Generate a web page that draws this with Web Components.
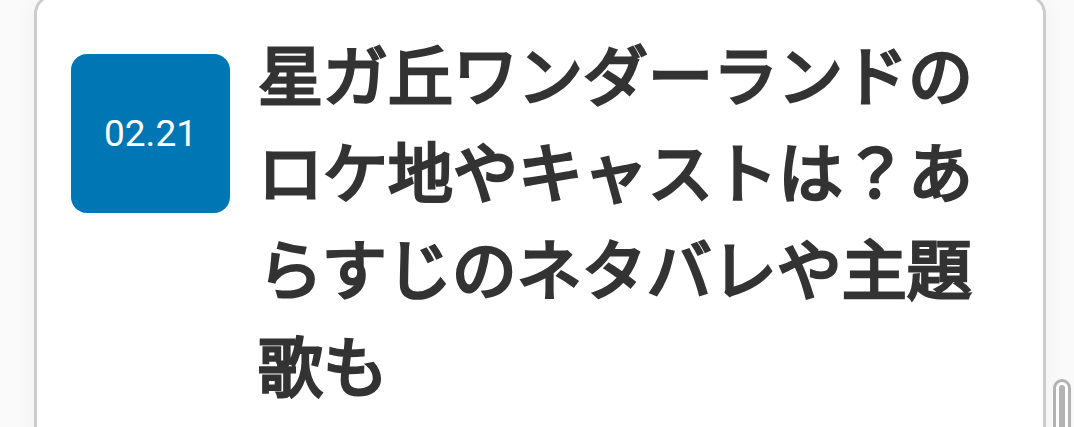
<!DOCTYPE html>
<html lang="ja">
<head>
<meta charset="utf-8">
<meta name="viewport" content="width=device-width, initial-scale=1">
<title>星ガ丘ワンダーランド</title>
<style>
  body {
    margin: 0;
    height: 100vh;
    overflow: hidden;
    background: #fafafa;
    color: #333;
    font-family: Roboto, "Noto Sans CJK JP", sans-serif;
  }
</style>
</head>
<body>
  <article-card>
    <date-tile slot="date">02.21</date-tile>
    <article-title>星ガ丘ワンダーランドのロケ地やキャストは？あらすじのネタバレや主題歌も</article-title>
  </article-card>
  <scroll-thumb></scroll-thumb>

<script>
  class ArticleCard extends HTMLElement {
    constructor() {
      super();

      this.attachShadow({ mode: 'open' });
      this.shadowRoot.innerHTML = `
        <style>
          :host {
            display: block;
            padding: 0 28px 0 34px;
          }

          .card {
            display: flex;
            align-items: flex-start;
            gap: 28px;
            box-sizing: border-box;
            min-height: 120vh;
            margin-top: -6px;
            padding: 27px 34px;
            background: #fff;
            border: 3px solid #ccc;
            border-radius: 20px;
            box-shadow: 0 0 24px rgba(0, 0, 0, 0.04);
          }

          ::slotted(date-tile) {
            margin-top: 30px;
          }
        </style>
        <article class="card">
          <slot name="date"></slot>
          <slot></slot>
        </article>
      `;
    }
  }

  class DateTile extends HTMLElement {
    constructor() {
      super();

      this.attachShadow({ mode: 'open' });
      this.shadowRoot.innerHTML = `
        <style>
          :host {
            display: flex;
            flex: none;
            align-items: center;
            justify-content: center;
            width: 159px;
            height: 159px;
            border-radius: 16px;
            background: #0077b5;
            color: #fff;
            font-size: 37px;
            line-height: 48px;
          }
        </style>
        <time><slot></slot></time>
      `;
    }
  }

  class ArticleTitle extends HTMLElement {
    constructor() {
      super();

      this.attachShadow({ mode: 'open' });
      this.shadowRoot.innerHTML = `
        <style>
          :host {
            display: block;
            flex: 1;
            min-width: 0;
          }

          /* regular weight thickened with an outline */
          h2 {
            margin: 0;
            font-family: "Noto Sans CJK JP", sans-serif;
            font-size: 65px;
            font-weight: 400;
            line-height: 97px;
            -webkit-text-stroke: 3px #333;
          }
        </style>
        <h2><slot></slot></h2>
      `;
    }
  }

  class ScrollThumb extends HTMLElement {
    constructor() {
      super();

      this.attachShadow({ mode: 'open' });
      this.shadowRoot.innerHTML = `
        <style>
          /* floats over the page at the right edge */
          :host {
            display: block;
            position: fixed;
            top: 379px;
            right: 3px;
            bottom: -20px;
            box-sizing: border-box;
            width: 18px;
            padding: 3px;
            border: 3px solid #b3b3b3;
            border-radius: 9px;
            background: #fff;
          }

          .thumb {
            height: 100%;
            border-radius: 3px;
            background: #b3b3b3;
          }
        </style>
        <div class="thumb"></div>
      `;
    }
  }

  customElements.define('article-card', ArticleCard);
  customElements.define('date-tile', DateTile);
  customElements.define('article-title', ArticleTitle);
  customElements.define('scroll-thumb', ScrollThumb);
</script>
</body>
</html>
